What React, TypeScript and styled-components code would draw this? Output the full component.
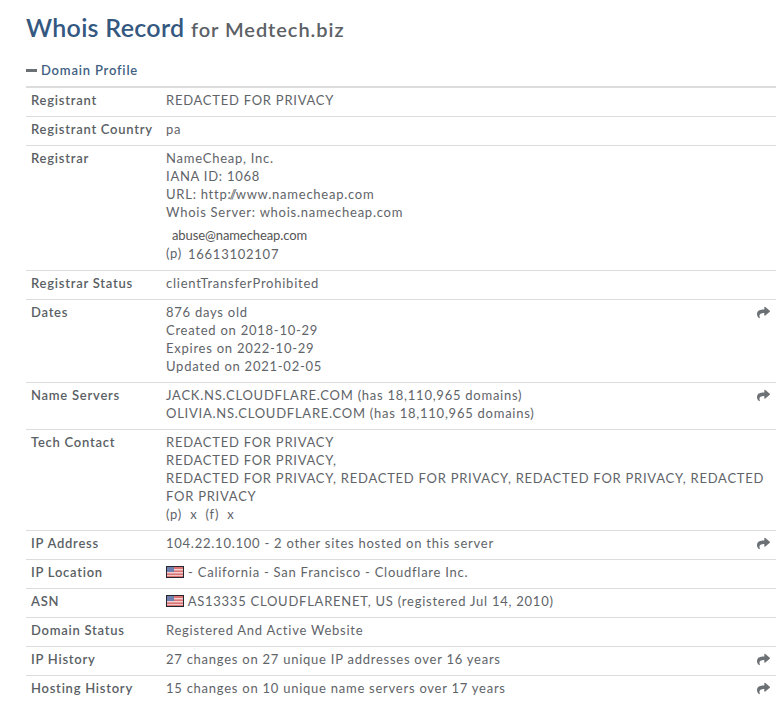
import React from "react";
import styled, { createGlobalStyle } from "styled-components";
import { FaShare } from "react-icons/fa";

const Global = createGlobalStyle`
  html, body {
    margin: 0;
    padding: 0;
    background: #ffffff;
  }
  body {
    font-family: Lato, "Liberation Sans", sans-serif;
    color: #555b61;
  }
`;

const Page = styled.div`
  width: 750px;
  padding: 11px 2px 0 26px;
`;

const Title = styled.h1`
  margin: 0;
  font-size: 25px;
  line-height: 32px;
  font-weight: 600;
  letter-spacing: 0.3px;
  color: #34587f;
`;

const TitleSub = styled.span`
  font-size: 20px;
  letter-spacing: 0.95px;
  color: #5c6166;
`;

const SectionHead = styled.div`
  display: flex;
  align-items: center;
  gap: 4px;
  margin-top: 14px;
  height: 22px;
  font-size: 13px;
  font-weight: 600;
  letter-spacing: 0.8px;
  color: #3f5f82;
`;

const Minus = styled.span`
  width: 11px;
  height: 3px;
  background: #6b7075;
`;

const Table = styled.div`
  margin-top: 5px;
  border-top: 2px solid #dcdcdc;
`;

const Row = styled.div`
  display: flex;
  align-items: flex-start;
  padding: 3px 6px 7px 5px;
  border-bottom: 1px solid #dcdcdc;
  font-size: 13px;
  line-height: 18px;
  letter-spacing: 0.75px;

  &:last-child {
    border-bottom: 0;
  }
`;

const Label = styled.div`
  flex: 0 0 135px;
  font-weight: 600;
  color: #5a5f65;
`;

const Value = styled.div`
  flex: 1;
  color: #5f6469;
`;

const Slashes = styled.span`
  letter-spacing: -1.3px;
`;

const Mail = styled.div`
  margin: 5px 0 0 6px;
  font-size: 13px;
  letter-spacing: -0.1px;
  color: #555;
`;

const Phone = styled.div`
  display: flex;
  gap: 6px;
  margin-top: 2px;
  line-height: 17px;
`;

const PhoneTag = styled.span`
  margin-top: -1px;
`;

const Share = styled(FaShare)`
  flex: 0 0 auto;
  width: 13px;
  height: 13px;
  margin-top: 3px;
  color: #6c7176;
`;

const FlagIcon = styled.svg`
  width: 18px;
  height: 12px;
  vertical-align: -1px;
`;

const Flag = () => (
  <FlagIcon viewBox="0 0 18 12">
    <rect width="18" height="12" fill="#26262e" />
    <rect x="1" y="1" width="16" height="10" fill="#dc7374" />
    <rect x="1" y="3" width="16" height="1.4" fill="#f0d0d0" />
    <rect x="1" y="6" width="16" height="1.4" fill="#f0d0d0" />
    <rect x="1" y="9" width="16" height="1" fill="#eec4c4" />
    <rect x="1" y="1" width="7" height="5" fill="#6f80b0" />
  </FlagIcon>
);

const lines = (items: string[]) => items.map((t) => <div key={t}>{t}</div>);

const App = () => (
  <Page>
    <Global />
    <Title>
      Whois Record <TitleSub>for Medtech.biz</TitleSub>
    </Title>
    <SectionHead>
      <Minus />
      Domain Profile
    </SectionHead>
    <Table>
      <Row>
        <Label>Registrant</Label>
        <Value>REDACTED FOR PRIVACY</Value>
      </Row>
      <Row>
        <Label>Registrant Country</Label>
        <Value>pa</Value>
      </Row>
      <Row>
        <Label>Registrar</Label>
        <Value>
          {lines(["NameCheap, Inc.", "IANA ID: 1068"])}
          <div>
            URL: http<Slashes>://</Slashes>www.namecheap.com
          </div>
          <div>Whois Server: whois.namecheap.com</div>
          <Mail>abuse@namecheap.com</Mail>
          <Phone>
            <PhoneTag>(p)</PhoneTag>
            <span>16613102107</span>
          </Phone>
        </Value>
      </Row>
      <Row>
        <Label>Registrar Status</Label>
        <Value>clientTransferProhibited</Value>
      </Row>
      <Row>
        <Label>Dates</Label>
        <Value>
          {lines([
            "876 days old",
            "Created on 2018-10-29",
            "Expires on 2022-10-29",
            "Updated on 2021-02-05",
          ])}
        </Value>
        <Share />
      </Row>
      <Row>
        <Label>Name Servers</Label>
        <Value>
          {lines([
            "JACK.NS.CLOUDFLARE.COM (has 18,110,965 domains)",
            "OLIVIA.NS.CLOUDFLARE.COM (has 18,110,965 domains)",
          ])}
        </Value>
        <Share />
      </Row>
      <Row>
        <Label>Tech Contact</Label>
        <Value>
          {lines([
            "REDACTED FOR PRIVACY",
            "REDACTED FOR PRIVACY,",
            "REDACTED FOR PRIVACY, REDACTED FOR PRIVACY, REDACTED FOR PRIVACY, REDACTED FOR PRIVACY",
            "(p)\u00a0 x\u00a0 (f)\u00a0 x",
          ])}
        </Value>
      </Row>
      <Row>
        <Label>IP Address</Label>
        <Value>104.22.10.100 - 2 other sites hosted on this server</Value>
        <Share />
      </Row>
      <Row>
        <Label>IP Location</Label>
        <Value>
          <Flag /> - California - San Francisco - Cloudflare Inc.
        </Value>
      </Row>
      <Row>
        <Label>ASN</Label>
        <Value>
          <Flag /> AS13335 CLOUDFLARENET, US (registered Jul 14, 2010)
        </Value>
      </Row>
      <Row>
        <Label>Domain Status</Label>
        <Value>Registered And Active Website</Value>
      </Row>
      <Row>
        <Label>IP History</Label>
        <Value>27 changes on 27 unique IP addresses over 16 years</Value>
        <Share />
      </Row>
      <Row>
        <Label>Hosting History</Label>
        <Value>15 changes on 10 unique name servers over 17 years</Value>
        <Share />
      </Row>
    </Table>
  </Page>
);

export default App;
